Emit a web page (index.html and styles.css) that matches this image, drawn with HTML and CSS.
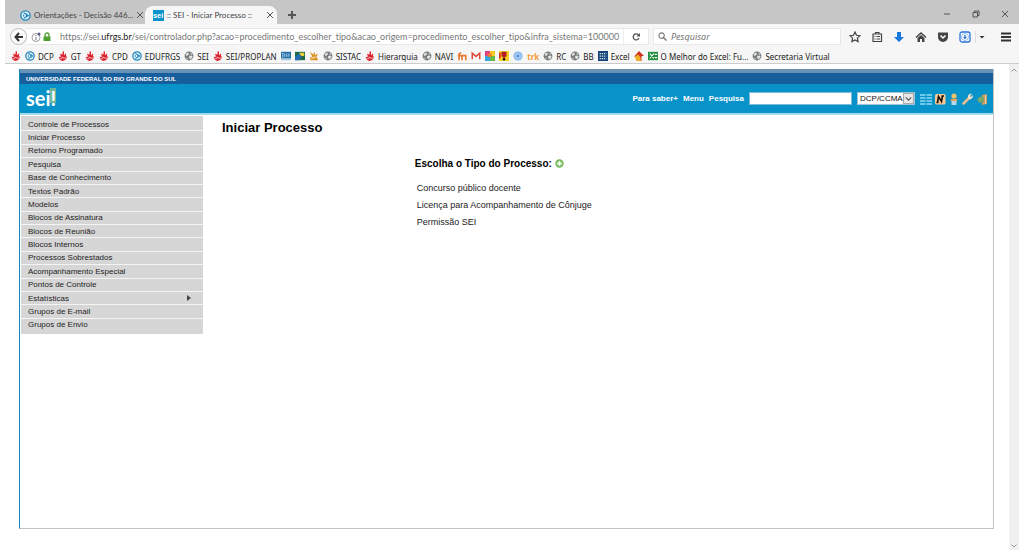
FILE: index.html
```html
<!DOCTYPE html>
<html lang="pt-BR">
<head>
<meta charset="utf-8">
<title>:: SEI - Iniciar Processo ::</title>
<link rel="stylesheet" href="styles.css">
</head>
<body>
<svg class="defs" aria-hidden="true">
  <symbol id="circle" viewBox="0 0 12 12"><circle cx="6" cy="6" r="5" fill="#e8f5fc" stroke="#2186bd" stroke-width="1.500"/><path d="M4 3l3 1.500v3L4 9M7 4.500L9 6 7 7.500M4 5v2" fill="none" stroke="#2186bd" stroke-width="1.300"/></symbol>
  <symbol id="flame" viewBox="0 0 12 12"><path d="M6 0c3 2 0 3.500 1.500 5L9 3c2 2-1 3 2 4-1 3-3 5-5.500 5C3 12 1 10 1 7l2 .5C4 5 2 4.500 3 3l2 1.500C6 3 5 1.500 6 0z" fill="#d9222e"/><path d="M2 9c2 1 3 0 3-2 1 2 3 2 5 1" fill="none" stroke="#fff" stroke-width=".8"/></symbol>
  <symbol id="globe" viewBox="0 0 12 12"><circle cx="6" cy="6" r="5.300" fill="#777b7d"/><path d="M2 4l2-2 2 .5L5 5 3 6zM6 6l3-.5L10.500 7 8 10 6.500 9zM8 2l2 2-2 .5zM2 8l2 0 .5 2z" fill="#e3e5e5"/></symbol>
</svg>
<div class="window">
  <header class="tabs">
    <div class="tab"><svg class="fav"><use href="#circle"/></svg><span>Orientações - Decisão 446...</span><button class="close" aria-label="Fechar guia"><svg viewBox="0 0 8 8"><path d="M1 1l6 6M7 1L1 7"/></svg></button></div>
    <div class="tab active"><svg class="fav" viewBox="0 0 12 12"><path fill="#0792ca" d="M0 0h12v12H0z"/><text x="0" y="9" class="favtext">sei</text></svg><span>:: SEI - Iniciar Processo ::</span><button class="close" aria-label="Fechar guia"><svg viewBox="0 0 8 8"><path d="M1 1l6 6M7 1L1 7"/></svg></button></div>
    <button class="close new" aria-label="Nova guia"><svg viewBox="0 0 8 8"><path d="M4 0v8M0 4h8"/></svg></button>
    <div class="winbtns">
      <button class="close" aria-label="Minimizar"><svg viewBox="0 0 8 8"><path d="M1 4h6"/></svg></button>
      <button class="close" aria-label="Restaurar"><svg viewBox="0 0 8 8"><path d="M1 2.500h4.500V7H1zM2.500 2.500V1H7v4.500H5.500"/></svg></button>
      <button class="close" aria-label="Fechar"><svg viewBox="0 0 8 8"><path d="M1 1l6 6M7 1L1 7"/></svg></button>
    </div>
  </header>
  <div class="toolbar">
    <button class="back" aria-label="Voltar"><svg viewBox="0 0 10 10"><path d="M9 5H2M5 1L1.500 5 5 9" fill="none" stroke="#333" stroke-width="2"/></svg></button>
    <div class="url">
      <svg class="info" viewBox="0 0 10 10"><circle cx="5" cy="5.500" r="4" fill="none" stroke="#999"/><path d="M5 5v3M5 3v1" stroke="#777"/><circle cx="8" cy="2" r="1.500" fill="#555b8a"/></svg>
      <svg class="lock" viewBox="0 0 8 10"><path d="M2 5V3a2 2 0 0 1 4 0v2" fill="none" stroke="#50a02f" stroke-width="1.300"/><path d="M.5 4.500h7V9h-7z" fill="#50a02f"/></svg>
      <span class="address">https://sei.<b>ufrgs.br</b>/sei/controlador.php?acao=procedimento_escolher_tipo&amp;acao_origem=procedimento_escolher_tipo&amp;infra_sistema=100000</span>
      <button class="reload" aria-label="Recarregar"><svg viewBox="0 0 10 10"><path d="M7.500 3A3 3 0 1 0 8 6" fill="none" stroke="#555" stroke-width="1.300"/><path d="M9 1v3.500H5.500z" fill="#555"/></svg></button>
    </div>
    <label class="find"><svg viewBox="0 0 10 10"><circle cx="4" cy="4" r="3" fill="none" stroke="#777" stroke-width="1.200"/><path d="M6 6l3.500 3.500" stroke="#777" stroke-width="1.500"/></svg><input type="text" placeholder="Pesquisar" aria-label="Pesquisar"></label>
    <div class="actions">
      <button aria-label="Favoritar"><svg viewBox="0 0 12 12"><path d="M6 1l1.500 3.300 3.500.4-2.600 2.400.7 3.500L6 8.900 2.900 10.600l.7-3.500L1 4.700l3.500-.4z" fill="none" stroke="#444" stroke-width="1.200"/></svg></button>
      <button aria-label="Biblioteca"><svg viewBox="0 0 12 12"><path d="M2 3h8.500v7.500H2zM4.500 3V1.500H8V3M3.500 5.500h1M5.500 5.500H9M3.500 8h1M5.500 8H9" fill="none" stroke="#444" stroke-width="1.200"/></svg></button>
      <button aria-label="Downloads"><svg viewBox="0 0 12 12"><path d="M4 1h4v5h3l-5 5-5-5h3z" fill="#1778dc"/></svg></button>
      <button aria-label="Início"><svg viewBox="0 0 12 12"><path d="M6 1l5.500 5-1 1L6 3 1.500 7l-1-1zM2.500 7L6 4l3.500 3v4H7V8H5v3H2.500z" fill="#444"/></svg></button>
      <button aria-label="Pocket"><svg viewBox="0 0 12 12"><path d="M1 1.500h10V6a5 5 0 0 1-10 0z" fill="#444"/><path d="M3.500 4.500L6 7l2.500-2.500" fill="none" stroke="#fff" stroke-width="1.500"/></svg></button>
      <button aria-label="Complemento"><svg viewBox="0 0 12 12"><rect x="1" y="1" width="10" height="10" rx="2" fill="#fff" stroke="#2672d8" stroke-width="1.300"/><circle cx="6" cy="6" r="3.500" fill="none" stroke="#7fabea" stroke-width=".8"/><path d="M5.300 4h1.400v2H8L6 8.200 4 6h1.300z" fill="#2672d8"/></svg></button>
      <button class="drop" aria-label="Opções"><svg viewBox="0 0 12 12"><path d="M3.500 5h5L6 7.500z" fill="#333"/></svg></button>
      <button class="burger" aria-label="Menu"><svg viewBox="0 0 12 12"><path d="M1 2.500h10M1 6h10M1 9.500h10" stroke="#333" stroke-width="1.800"/></svg></button>
    </div>
  </div>
  <nav class="bookmarks" aria-label="Favoritos">
    <a href="#" aria-label="UFRGS"><svg><use href="#flame"/></svg></a>
    <a href="#"><svg><use href="#circle"/></svg>DCP</a>
    <a href="#"><svg><use href="#flame"/></svg>GT</a>
    <a href="#" aria-label="UFRGS"><svg><use href="#flame"/></svg></a>
    <a href="#"><svg><use href="#flame"/></svg>CPD</a>
    <a href="#"><svg><use href="#circle"/></svg>EDUFRGS</a>
    <a href="#"><svg><use href="#globe"/></svg>SEI</a>
    <a href="#"><svg><use href="#flame"/></svg>SEI/PROPLAN</a>
    <a href="#" aria-label="SCDP"><svg viewBox="0 0 12 12"><path fill="#1e6ca8" d="M0 1h12v8H0z"/><path fill="#a5c5da" d="M0 9h12v2H0z"/><path d="M1 3h2M1 5h2M1 7h2M4.500 3v4M7 3v4M9.500 3v4" stroke="#d7e8f3"/></svg></a>
    <a href="#" aria-label="Brasil"><svg viewBox="0 0 12 12"><path fill="#1f6848" d="M0 1h12v10H0z"/><path fill="#e9cf39" d="M5 2h6v4H7z"/><path fill="#246bb0" d="M0 7l5-4 3 4-3 4H0z"/></svg></a>
    <a href="#" aria-label="Portal"><svg viewBox="0 0 12 12"><path d="M1 1l4 3 2-3v4l4-2-2 4 2 4H2L1 8l3-1z" fill="#d99524"/><path d="M3 9l5-2" stroke="#fff"/></svg></a>
    <a href="#"><svg><use href="#globe"/></svg>SISTAC</a>
    <a href="#"><svg><use href="#flame"/></svg>Hierarquia</a>
    <a href="#"><svg><use href="#globe"/></svg>NAVI</a>
    <a href="#" aria-label="Moodle"><svg viewBox="0 0 12 12"><path d="M2.500 11V3.500L5 2M1 5.500h4M6 11V5.500h4.500V11" fill="none" stroke="#e8762c" stroke-width="1.900"/></svg></a>
    <a href="#" aria-label="Gmail"><svg viewBox="0 0 12 12"><path d="M1.500 10V2.500L6 6.500l4.500-4V10" fill="none" stroke="#dd4b3e" stroke-width="1.800"/></svg></a>
    <a href="#" aria-label="Cores"><svg viewBox="0 0 12 12"><path fill="#e43d8b" d="M0 0h6v6H0z"/><path fill="#f4cc23" d="M6 0h6v6H6z"/><path fill="#36a4e3" d="M0 6h6v6H0z"/><path fill="#65bb45" d="M6 6h6v6H6z"/><path fill="#ef7926" d="M3 3h5v4H3z"/></svg></a>
    <a href="#" aria-label="Pergunta"><svg viewBox="0 0 12 12"><path fill="#f7cf20" d="M0 0h12v12H0z"/><path d="M3 1h6v5L7 8H5L3 6z" fill="#b51d24"/><circle cx="6" cy="10" r="1.500" fill="#111"/><path d="M0 2h2v7H0z" fill="#d72c28"/></svg></a>
    <a href="#" aria-label="Chromium"><svg viewBox="0 0 12 12"><circle cx="6" cy="6" r="5.500" fill="#8ebbed"/><circle cx="6" cy="6" r="2.500" fill="#538cdc" stroke="#d8e9fb"/></svg></a>
    <a href="#" class="trk">trk</a>
    <a href="#"><svg><use href="#globe"/></svg>RC</a>
    <a href="#"><svg><use href="#globe"/></svg>BB</a>
    <a href="#"><svg viewBox="0 0 12 12"><path fill="#174477" d="M0 0h12v12H0z"/><path d="M2 3h8M2 6h8M2 9h8" stroke="#d5e4f1" stroke-width="1.500" stroke-dasharray="1.500 1"/></svg>Excel</a>
    <a href="#" aria-label="Casa"><svg viewBox="0 0 12 12"><path d="M6 0l6 6H9v6H4V7H0z" fill="#cc3024"/><path d="M1 7l4-3 3 4v4H3z" fill="#efae29"/></svg></a>
    <a href="#"><svg viewBox="0 0 12 12"><path fill="#21913e" d="M0 1h12v10H0z"/><path d="M2 3l5 6M7 3L2 9M8 4h3M8 8h3" stroke="#fff" stroke-width="1.400"/></svg>O Melhor do Excel: Fu...</a>
    <a href="#"><svg><use href="#globe"/></svg>Secretaria Virtual</a>
  </nav>
  <div class="viewport">
    <div class="page">
      <header class="top">
        <div class="org">UNIVERSIDADE FEDERAL DO RIO GRANDE DO SUL</div>
        <div class="bar">
          <div class="logo">se<span>i!</span></div>
          <div class="tools">
            <a href="#">Para saber+</a><a href="#">Menu</a><label for="q">Pesquisa</label><input id="q" type="text">
            <span class="unit"><select aria-label="Unidade"><option>DCP/CCMA</option></select><svg viewBox="0 0 10 10"><path d="M.5.5h9v9h-9z" fill="#e8e8e8" stroke="#aaa"/><path d="M2.500 4L5 6.500 7.500 4" fill="none" stroke="#555"/></svg></span>
            <div class="icons">
              <a href="#" aria-label="Controle de Processos"><svg viewBox="0 0 12 12"><path d="M0 2h5.500M6.500 2H12M0 5h5.500M6.500 5H12M0 8h5.500M6.500 8H12M0 11h5.500M6.500 11H12" stroke="#8fdcf5" stroke-width="1.300"/></svg></a>
              <a href="#" aria-label="Novidades"><svg viewBox="0 0 12 12"><rect x="1" y="1" width="10.500" height="10.500" rx="1.500" fill="#f9c894"/><path d="M3.500 9.500l1-6 3 5 1-6M2.500 9.500h2M7.500 3h2.500" fill="none" stroke="#181008" stroke-width="1.600"/></svg></a>
              <a href="#" aria-label="Usuário"><svg viewBox="0 0 12 12"><circle cx="6" cy="3" r="2.600" fill="#ecc16d"/><path d="M2.500 6h7l-1 3h-5z" fill="#e6a05b"/><path d="M3.500 8h5v4h-5z" fill="#b4d7e9"/></svg></a>
              <a href="#" aria-label="Configurações"><svg viewBox="0 0 12 12"><path d="M1.500 10.500l5.500-5.500" stroke="#efbd8e" stroke-width="2.500" stroke-linecap="round"/><path d="M11 2L9 4 8 3l2-2C7 0 5 3 6.500 5.500S11.500 5 11 2z" fill="#f4dec5"/></svg></a>
              <a href="#" aria-label="Sair"><svg viewBox="0 0 12 12"><path d="M6 2l5-1v10l-5 1z" fill="#c99863"/><path d="M9.500 2v9" stroke="#f0cc9b"/><path d="M8 4v5H4.500v2L1 6.500 4.500 3v1z" fill="#78a969"/></svg></a>
            </div>
          </div>
        </div>
      </header>
      <div class="columns">
        <nav class="menu" aria-label="Menu principal">
          <a href="#">Controle de Processos</a><a href="#">Iniciar Processo</a><a href="#">Retorno Programado</a><a href="#">Pesquisa</a><a href="#">Base de Conhecimento</a><a href="#">Textos Padrão</a><a href="#">Modelos</a><a href="#">Blocos de Assinatura</a><a href="#">Blocos de Reunião</a><a href="#">Blocos Internos</a><a href="#">Processos Sobrestados</a><a href="#">Acompanhamento Especial</a><a href="#">Pontos de Controle</a><a href="#" class="sub">Estatísticas<svg viewBox="0 0 4 6"><path d="M0 0l4 3-4 3z" fill="#444"/></svg></a><a href="#">Grupos de E-mail</a><a href="#">Grupos de Envio</a>
        </nav>
        <main class="content">
          <h1>Iniciar Processo</h1>
          <section class="types">
            <h2>Escolha o Tipo do Processo: <button aria-label="Exibir todos os tipos"><svg viewBox="0 0 10 10"><circle cx="5" cy="5" r="4.600" fill="#6eb153"/><circle cx="5" cy="5" r="3.600" fill="#88c56d"/><path d="M5 2.500v5M2.500 5h5" stroke="#fff" stroke-width="1.700"/></svg></button></h2>
            <a href="#">Concurso público docente</a>
            <a href="#">Licença para Acompanhamento de Cônjuge</a>
            <a href="#">Permissão SEI</a>
          </section>
        </main>
      </div>
    </div>
    <div class="scroll" aria-hidden="true"><svg viewBox="0 0 8 8"><path d="M1.500 5.500L4 3l2.500 2.500"/></svg><svg viewBox="0 0 8 8"><path d="M1.500 2.500L4 5l2.500-2.500"/></svg></div>
  </div>
</div>
</body>
</html>
```
FILE: styles.css
```css
* { box-sizing: border-box; }
body { margin: 0; background: #fff; font-family: "Liberation Sans", Arial, sans-serif; }
a { color: inherit; text-decoration: none; }
button { border: 0; padding: 0; background: none; display: inline-flex; align-items: center; justify-content: center; }
svg { display: block; flex: none; }
.defs { position: absolute; width: 0; height: 0; }
.window { display: flex; flex-direction: column; min-height: 100vh; padding: 0 5px 5px; }

.tabs { display: flex; align-items: flex-end; height: 24px; background: #c6c6c6; font: 8px Lato, sans-serif; font-variant-ligatures: none; color: #444; }
.tab { display: flex; align-items: center; gap: 3px; width: 132px; height: 18px; margin-left: 8px; padding: 0 0 0 7px; white-space: nowrap; }
.tab.active { background: #f6f6f6; border-radius: 8px 8px 0 0; padding-left: 8px; margin-left: 0; }
.tab span { flex: 1; }
.fav { width: 11px; height: 11px; }
.favtext { font: bold 8px "Liberation Sans", sans-serif; fill: #fff; }
.close svg { width: 8px; height: 8px; fill: none; stroke: #555; stroke-width: 1; }
.tab .close { margin-right: 3px; }
.new { height: 18px; margin-left: 11px; }
.new svg { stroke-width: 2; }
.winbtns { display: flex; gap: 21px; align-self: center; margin: 3px 10px 0 auto; }

.toolbar { display: flex; align-items: center; height: 25px; padding: 0 7px 0 5px; background: #f6f6f6; }
.back { width: 17px; height: 17px; border: 1px solid #bbb; border-radius: 50%; background: #fcfcfc; }
.back svg { width: 10px; height: 10px; }
.url { display: flex; align-items: center; flex: 1; height: 17px; padding-left: 4px; background: #fff; border: 1px solid #e8e8e8; border-left: 0; font: 9px Lato, sans-serif; font-variant-ligatures: none; color: #777; }
.info { width: 10px; height: 10px; margin-right: 2px; }
.lock { width: 8px; height: 10px; margin-right: 9px; }
.address { flex: 1; white-space: nowrap; }
.address b { color: #222; font-weight: 400; }
.reload { width: 25px; height: 15px; border-left: 1px solid #eee; }
.reload svg { width: 10px; height: 10px; }
.find { display: flex; align-items: center; gap: 4px; width: 188px; height: 17px; margin-left: 4px; padding-left: 4px; background: #fff; border: 1px solid #e8e8e8; }
.find svg { width: 9px; height: 9px; }
.find input { width: 100%; min-width: 0; border: 0; padding: 0; background: none; font: italic 9px "Noto Sans", sans-serif; }
.find input::placeholder { color: #777; }
.actions { display: flex; align-items: center; gap: 10px; margin-left: 8px; }
.actions svg { width: 12px; height: 12px; }
.actions .drop { margin-left: -6px; border-left: 1px solid #ddd; }
.actions .burger { padding-left: 2px; }

.bookmarks { display: flex; align-items: center; gap: 4px; height: 15px; padding-left: 6px; background: #f6f6f6; border-bottom: 1px solid #ccc; font: 8px "Noto Sans", sans-serif; color: #222; white-space: nowrap; }
.bookmarks a { display: flex; align-items: center; gap: 3px; }
.bookmarks svg { width: 10px; height: 10px; }
.bookmarks .trk { color: #f39a37; font-weight: 700; }

.viewport { display: flex; flex: 1; }
.page { flex: 1; display: flex; flex-direction: column; margin: 5px 15px 21px 14px; border-right: 1px solid #c4c4c4; border-bottom: 1px solid #c4c4c4; border-left: 1px solid #1784b8; }
.top { border-top: 4px solid #6891b5; border-bottom: 2px solid #a6d9ee; color: #fff; }
.org { height: 11px; padding-left: 6px; background: #165e9c; font-size: 6px; font-weight: 700; line-height: 12px; }
.bar { display: flex; justify-content: space-between; height: 29px; padding: 0 5px 0 6px; background: #0792ca; }
.logo { font: bold 20px/29px Lato, sans-serif; }
.logo span { background: linear-gradient(90deg, transparent 50%, #6db59a 50%) no-repeat 0 2px / 100% 15px; }
.tools { display: flex; align-items: center; gap: 5px; font-size: 8px; font-weight: 700; }
.tools input { width: 103px; height: 13px; padding: 0 2px; border: 1px solid #7dbbd8; background: #fff; font: 8px "Liberation Sans", sans-serif; }
.unit { display: grid; align-items: center; width: 58px; height: 13px; background: #fff; border: 1px solid #9cc5d9; }
.unit select { grid-area: 1 / 1; appearance: none; height: 11px; padding: 0 2px; border: 0; background: none; font: 8px "Liberation Sans", sans-serif; color: #111; }
.unit svg { grid-area: 1 / 1; justify-self: end; width: 11px; height: 11px; pointer-events: none; }
.icons { display: flex; gap: 2px; }
.icons svg { width: 12px; height: 12px; }

.columns { display: flex; flex: 1; align-items: flex-start; }
.menu { display: flex; flex-direction: column; width: 182px; min-height: 218px; margin: 1px 0 0 1px; padding: 2px 0 3px; background: #d6d6d6; font-size: 8px; color: #222; }
.menu a { flex: 1; display: flex; align-items: center; justify-content: space-between; padding: 0 12px 0 7px; border-bottom: 1px solid #f4f4f4; }
.menu a:last-child { border-bottom: 0; }
.menu svg { width: 4px; height: 6px; }
.content { flex: 1; padding: 5px 0 0 19px; }
h1 { margin: 0; font-size: 13px; line-height: 16px; }
.types { display: flex; flex-direction: column; margin: 19px 0 0 25%; font-size: 9px; line-height: 17px; color: #222; }
.types h2 { display: flex; align-items: center; gap: 3px; margin: 0 0 8px; font-size: 10px; line-height: 17px; color: #000; }
.types h2 svg { width: 9px; height: 9px; }
.types a { padding-left: 2px; }
.scroll { display: flex; flex-direction: column; justify-content: space-between; align-items: center; width: 10px; padding: 2px 0 0; background: #f0f0f0; }
.scroll svg { width: 8px; height: 8px; fill: none; stroke: #999; }
```
